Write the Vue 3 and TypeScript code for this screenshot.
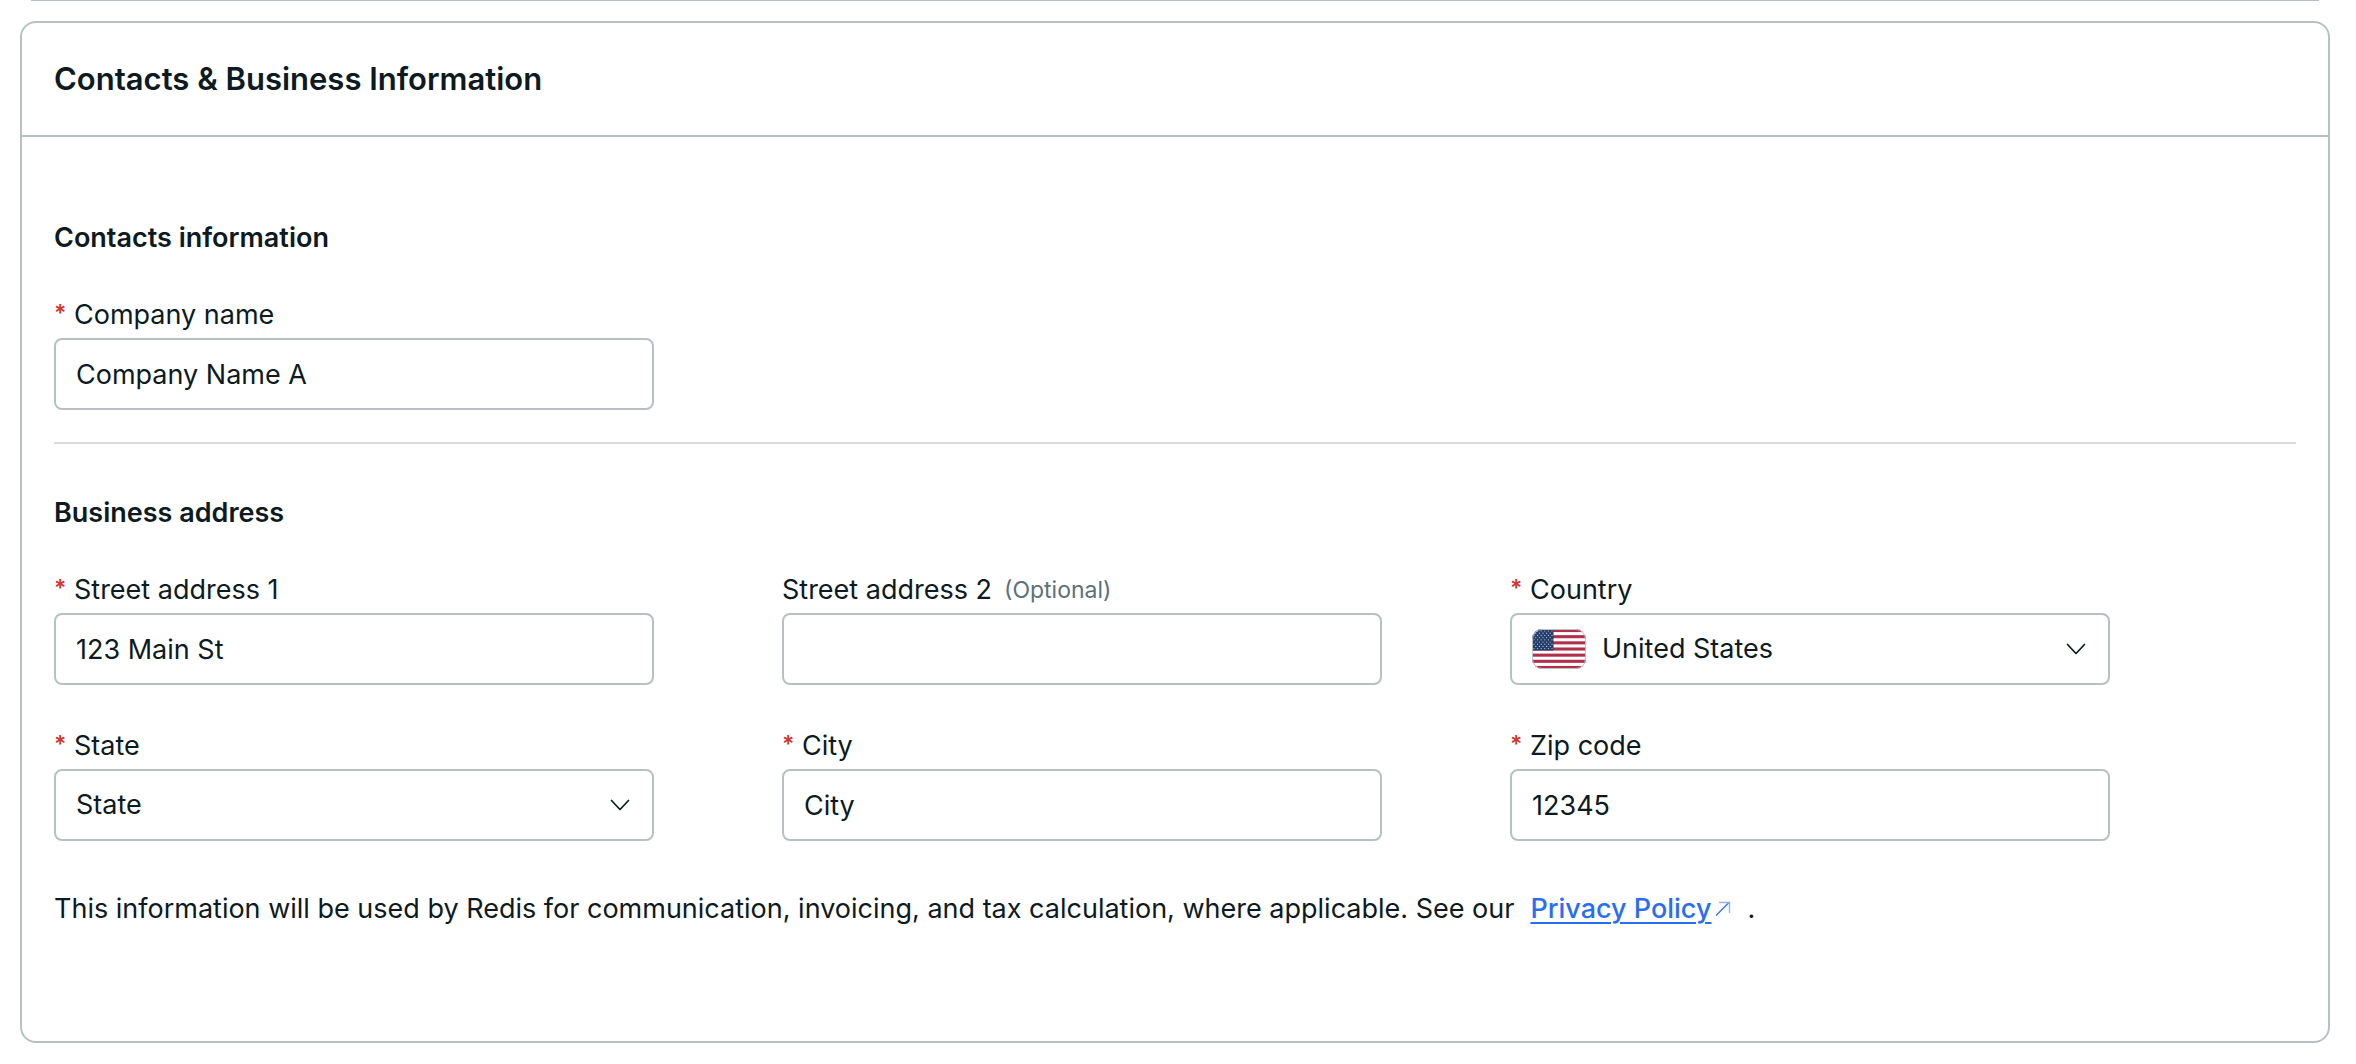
<script setup lang="ts">
import { reactive } from 'vue'

interface Field {
  id: string
  label: string
  required: boolean
  kind: 'text' | 'select'
  options?: string[]
  flag?: boolean
}

const form = reactive<Record<string, string>>({
  company: 'Company Name A',
  street1: '123 Main St',
  street2: '',
  country: 'United States',
  state: 'State',
  city: 'City',
  zip: '12345',
})

const contactFields: Field[] = [
  { id: 'company', label: 'Company name', required: true, kind: 'text' },
]

const addressFields: Field[] = [
  { id: 'street1', label: 'Street address 1', required: true, kind: 'text' },
  { id: 'street2', label: 'Street address 2', required: false, kind: 'text' },
  { id: 'country', label: 'Country', required: true, kind: 'select', options: ['United States'], flag: true },
  { id: 'state', label: 'State', required: true, kind: 'select', options: ['State'] },
  { id: 'city', label: 'City', required: true, kind: 'text' },
  { id: 'zip', label: 'Zip code', required: true, kind: 'text' },
]

const sections = [
  { title: 'Contacts information', fields: contactFields },
  { title: 'Business address', fields: addressFields },
]

// Canton stars: nine rows alternating between six and five
const stars = Array.from({ length: 9 }, (_, r) =>
  Array.from({ length: r % 2 ? 5 : 6 }, (_, c) => ({
    x: 2 + c * 3.6 + (r % 2 ? 1.8 : 0),
    y: 2 + r * 2.2,
  })),
).flat()
</script>

<template>
  <main class="page">
    <div class="previous-card"></div>
    <section class="card">
      <header class="card-header">
        <h1>Contacts &amp; Business Information</h1>
      </header>
      <form class="card-body" @submit.prevent>
        <section v-for="section in sections" :key="section.title" class="section">
          <h2>{{ section.title }}</h2>
          <div class="fields">
            <div v-for="field in section.fields" :key="field.id" class="field">
              <label :for="field.id">
                <span v-if="field.required" class="star">*</span>
                <span>{{ field.label }}</span>
                <span v-if="!field.required" class="optional">(Optional)</span>
              </label>
              <input v-if="field.kind === 'text'" :id="field.id" v-model="form[field.id]" class="control" type="text" />
              <div v-else class="select-wrap">
                <select :id="field.id" v-model="form[field.id]" class="control" :class="{ 'with-flag': field.flag }">
                  <option v-for="o in field.options" :key="o">{{ o }}</option>
                </select>
                <svg v-if="field.flag" class="flag" viewBox="0 0 54 40" aria-hidden="true">
                  <defs>
                    <clipPath id="flag-shape"><rect width="54" height="40" rx="10" /></clipPath>
                  </defs>
                  <g clip-path="url(#flag-shape)">
                    <rect width="54" height="40" fill="#fff" />
                    <rect v-for="n in 7" :key="n" :y="(n - 1) * 6.154" width="54" height="3.077" fill="#b22f4b" />
                    <rect width="21.5" height="21.5" fill="#233c6c" />
                    <circle v-for="(s, i) in stars" :key="i" :cx="s.x" :cy="s.y" r="0.6" fill="#c5cedb" />
                  </g>
                  <rect x="0.5" y="0.5" width="53" height="39" rx="9.5" fill="none" stroke="#b9c2c6" />
                </svg>
                <svg class="chevron" viewBox="0 0 20 12" aria-hidden="true">
                  <path d="M1.5 1.5 10 10.5 18.5 1.5" fill="none" stroke="#0d1a22" stroke-width="1.7" stroke-linecap="round" stroke-linejoin="round" />
                </svg>
              </div>
            </div>
          </div>
        </section>
        <p class="note">
          <span>This information will be used by Redis for communication, invoicing, and tax calculation, where applicable. See our</span>
          <a href="#privacy"><span class="link-text">Privacy Policy</span><svg viewBox="0 0 16 16" aria-hidden="true">
            <path d="M1 14.5 14.5 1" fill="none" stroke="currentColor" stroke-width="1.3" />
            <path d="M4 1.5h10.5v10.5" fill="none" stroke="#8fb3f8" stroke-width="1.4" />
          </svg></a>
          <span>.</span>
        </p>
      </form>
    </section>
  </main>
</template>

<style>
body {
  margin: 0;
  background: #fff;
}
</style>

<style scoped>
.page {
  padding: 0 26px 0 20px;
  color: #0d1a22;
  font-family: Inter, "Liberation Sans", sans-serif;
  font-size: 27px;
  line-height: 36px;
}

.previous-card {
  height: 1px;
  margin: 0 11px 20px;
  background: #b9c0c4;
}

.card {
  border: 2px solid #b9c0c4;
  border-radius: 16px;
}

.card-header {
  padding: 36px 32px;
  border-bottom: 2px solid #b9c0c4;
}

h1 {
  margin: 0;
  font-size: 31px;
  font-weight: 600;
  line-height: 40px;
}

.card-body {
  padding: 83px 32px 114px;
}

.section + .section {
  margin-top: 32px;
  padding-top: 51px;
  border-top: 2px solid #d9dbdc;
}

h2 {
  margin: 0 0 41px;
  font-size: 27px;
  font-weight: 600;
  line-height: 36px;
}

.fields {
  display: grid;
  grid-template-columns: repeat(auto-fill, 600px);
  gap: 43px 128px;
}

.field {
  display: flex;
  flex-direction: column;
  gap: 5px;
}

label {
  display: flex;
}

.star {
  width: 20px;
  color: #d0382d;
  font-size: 23px;
  font-weight: 600;
  line-height: 32px;
}

.optional {
  margin-left: 12px;
  color: #5c707a;
  font-size: 23px;
}

.control {
  box-sizing: border-box;
  display: block;
  width: 100%;
  height: 72px;
  padding: 0 20px;
  border: 2px solid #b9c0c4;
  border-radius: 8px;
  outline: none;
  appearance: none;
  background: #fff;
  color: inherit;
  font: inherit;
}

.select-wrap {
  position: relative;
}

.with-flag {
  padding-left: 90px;
}

.flag {
  position: absolute;
  top: 16px;
  left: 22px;
  width: 54px;
  height: 40px;
}

.chevron {
  position: absolute;
  top: 30px;
  right: 24px;
  width: 20px;
  height: 12px;
  pointer-events: none;
}

.note {
  display: flex;
  margin: 50px 0 0;
}

a {
  display: flex;
  align-items: center;
  margin: 0 16px;
  color: #2a6df0;
  font-weight: 500;
  text-decoration: none;
}

.link-text {
  text-decoration: underline;
  text-decoration-thickness: 2px;
  text-underline-offset: 4px;
}

a svg {
  width: 16px;
  height: 16px;
  margin-left: 4px;
}
</style>
